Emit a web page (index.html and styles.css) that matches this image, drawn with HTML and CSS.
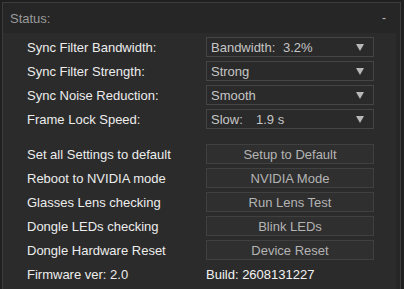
FILE: index.html
```html
<!DOCTYPE html>
<html lang="en">
<head>
    <meta charset="UTF-8">
    <title>Status</title>
    <link rel="stylesheet" href="styles.css">
</head>
<body>
    <div class="panel">
        <div class="panel-header">
            <span class="title">Status:</span>
            <span class="collapse">-</span>
        </div>
        <div class="panel-body">
            <div class="settings">
                <div class="row">
                    <div class="label">Sync Filter Bandwidth:</div>
                    <div class="select"><span class="key key-wide">Bandwidth:</span><span>3.2%</span><span class="arrow"></span></div>
                </div>
                <div class="row">
                    <div class="label">Sync Filter Strength:</div>
                    <div class="select"><span>Strong</span><span class="arrow"></span></div>
                </div>
                <div class="row">
                    <div class="label">Sync Noise Reduction:</div>
                    <div class="select"><span>Smooth</span><span class="arrow"></span></div>
                </div>
                <div class="row">
                    <div class="label">Frame Lock Speed:</div>
                    <div class="select"><span class="key key-short">Slow:</span><span>1.9 s</span><span class="arrow"></span></div>
                </div>
            </div>
            <div class="actions">
                <div class="row">
                    <div class="label">Set all Settings to default</div>
                    <button>Setup to Default</button>
                </div>
                <div class="row">
                    <div class="label">Reboot to NVIDIA mode</div>
                    <button>NVIDIA Mode</button>
                </div>
                <div class="row">
                    <div class="label">Glasses Lens checking</div>
                    <button>Run Lens Test</button>
                </div>
                <div class="row">
                    <div class="label">Dongle LEDs checking</div>
                    <button>Blink LEDs</button>
                </div>
                <div class="row">
                    <div class="label">Dongle Hardware Reset</div>
                    <button>Device Reset</button>
                </div>
                <div class="row">
                    <div class="label">Firmware ver: 2.0</div>
                    <div class="build">Build: 2608131227</div>
                </div>
            </div>
        </div>
    </div>
</body>
</html>
```

FILE: styles.css
```css
html, body {
    margin: 0;
    height: 100%;
}
body {
    background-color: #1f1f1f;
    font-family: "Liberation Sans", Arial, sans-serif;
    font-size: 13px;
    color: #ececec;
    padding: 2px 3px 0 2px;
    box-sizing: border-box;
}
.panel {
    height: 100%;
    border: 1px solid #3c3c3c;
    border-bottom: none;
    background-color: #2b2b2b;
    display: flex;
    flex-direction: column;
}
.panel-header {
    height: 30px;
    background-color: #262626;
    display: flex;
    align-items: center;
    justify-content: space-between;
    padding: 0 14px 0 7px;
}
.title {
    color: #9a9a9a;
    font-size: 13px;
}
.collapse {
    color: #bdbdbd;
    font-size: 12px;
}
.panel-body {
    flex: 1;
    padding: 4px 0 0 24px;
    border-right: 4px solid #262626;
}
.row {
    display: flex;
    align-items: center;
    height: 20px;
    margin-bottom: 4px;
}
.label {
    width: 179px;
    color: #ededed;
}
.settings {
    margin-bottom: 15px;
}
.select {
    width: 162px;
    height: 18px;
    border: 1px solid #454545;
    background-color: #2a2a2a;
    display: flex;
    align-items: center;
    padding-left: 4px;
    color: #c6c6c6;
    position: relative;
}
.key-wide {
    width: 72px;
}
.key-short {
    width: 45px;
}
.arrow {
    position: absolute;
    right: 9px;
    top: 6px;
    width: 0;
    height: 0;
    border-left: 4px solid transparent;
    border-right: 4px solid transparent;
    border-top: 7px solid #b8b8b8;
}
button {
    width: 168px;
    height: 20px;
    margin: 0;
    padding: 0;
    border: 1px solid #404040;
    background-color: #2f2f2f;
    color: #b4b4b4;
    font-family: "Liberation Sans", Arial, sans-serif;
    font-size: 13px;
}
.build {
    color: #f2f2f2;
}
```
